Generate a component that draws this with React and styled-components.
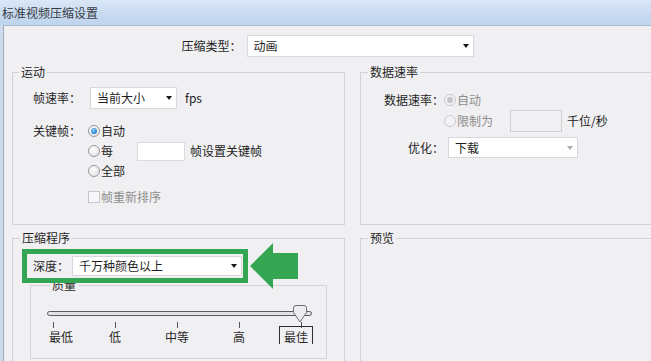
import React from "react";
import styled, { createGlobalStyle } from "styled-components";

const GlobalStyle = createGlobalStyle`
  html, body {
    margin: 0;
    padding: 0;
    overflow: hidden;
    background: #f0eff2;
  }
  body {
    font-family: "Noto Sans CJK SC", "Noto Sans", sans-serif;
    font-size: 12px;
    color: #1f1f1f;
  }
`;

const Window = styled.div`
  width: 651px;
  height: 361px;
  overflow: hidden;
  display: flex;
  flex-direction: column;
  background: #cddbec;
`;

const TitleBar = styled.div`
  height: 25px;
  flex: none;
  display: flex;
  align-items: center;
  padding-left: 2px;
  background: linear-gradient(180deg, #dae7f6 0%, #c8dbf1 55%, #bfd4ee 100%);
  color: #383c42;
  line-height: 14px;
`;

const Body = styled.div`
  flex: 1;
  margin-left: 3px;
  border-top: 1px solid #aab8ca;
  border-left: 1px solid #9dabbd;
  background: #f0eff2;
  display: flex;
  flex-direction: column;
`;

const TypeRow = styled.div`
  display: flex;
  justify-content: center;
  align-items: center;
  gap: 5px;
  margin-top: 9px;
  line-height: 22px;
`;

const Panels = styled.div`
  display: grid;
  grid-template-columns: 333px 330px;
  grid-template-rows: 160px 140px;
  column-gap: 15px;
  row-gap: 6px;
  margin: 8px 0 0 8px;
`;

const Group = styled.fieldset`
  margin: 0;
  padding: 0;
  min-width: 0;
  border: 1px solid #d3d3d7;
`;

const Legend = styled.legend`
  margin-left: ${(p) => p.$indent ?? 6}px;
  padding: 0 2px;
  line-height: 14px;
  font-size: 12px;
`;

const FormGrid = styled.div`
  display: grid;
  grid-template-columns: ${(p) => p.$labelWidth}px 1fr;
  column-gap: ${(p) => p.$gap ?? 0}px;
  padding-top: ${(p) => p.$top}px;
  align-items: center;
`;

const FieldLabel = styled.div`
  text-align: right;
  line-height: ${(p) => p.$lh ?? 20}px;
  align-self: ${(p) => (p.$top ? "start" : "center")};
  margin-top: ${(p) => p.$mt ?? 0}px;
  color: ${(p) => (p.$disabled ? "#8d8d8d" : "inherit")};
`;

const Controls = styled.div`
  display: flex;
  flex-direction: ${(p) => (p.$column ? "column" : "row")};
  align-items: ${(p) => (p.$column ? "stretch" : "center")};
  margin-top: ${(p) => p.$mt ?? 0}px;
  min-height: 20px;
`;

const SelectBox = styled.div`
  box-sizing: border-box;
  display: flex;
  align-items: center;
  justify-content: space-between;
  width: ${(p) => p.$w}px;
  height: ${(p) => p.$h ?? 22}px;
  margin-left: ${(p) => p.$ml ?? 0}px;
  padding: 0 4px 0 6px;
  background: #fff;
  border: 1px solid #d8d8dc;
  line-height: 14px;
  white-space: nowrap;
`;

const Caret = styled.span`
  width: 0;
  height: 0;
  border-left: 3.5px solid transparent;
  border-right: 3.5px solid transparent;
  border-top: 4px solid ${(p) => (p.$muted ? "#a9a9ad" : "#1a1a1a")};
`;

const Unit = styled.span`
  margin-left: ${(p) => p.$ml ?? 5}px;
  line-height: 20px;
  color: ${(p) => (p.$disabled ? "#8d8d8d" : "#222")};
`;

const Option = styled.label`
  display: flex;
  align-items: center;
  height: 20px;
  width: ${(p) => (p.$w ? `${p.$w}px` : "auto")};
  flex: none;
  color: ${(p) => (p.$disabled ? "#8d8d8d" : "inherit")};
  line-height: 14px;
`;

const RadioDot = styled.span`
  box-sizing: border-box;
  width: 12px;
  height: 12px;
  margin-right: 1px;
  border-radius: 50%;
  border: 1px solid ${(p) => (p.$disabled ? "#cacace" : "#9a9a9e")};
  background: ${(p) =>
    p.$disabled
      ? "#f3f3f5"
      : "radial-gradient(circle at 40% 35%, #ffffff 0%, #e4e4e8 80%)"};
  display: flex;
  align-items: center;
  justify-content: center;
  &::after {
    content: "";
    display: ${(p) => (p.$checked ? "block" : "none")};
    width: 6px;
    height: 6px;
    border-radius: 50%;
    background: ${(p) =>
      p.$disabled
        ? "#c4c4c8"
        : "radial-gradient(circle at 40% 35%, #8fd0ff 0%, #2277c9 75%)"};
  }
`;

const CheckBox = styled.span`
  box-sizing: border-box;
  width: 12px;
  height: 12px;
  margin-right: 1px;
  border: 1px solid #c6c6ca;
  background: #f6f6f8;
`;

const TextBox = styled.span`
  box-sizing: border-box;
  width: ${(p) => p.$w}px;
  height: ${(p) => p.$h}px;
  flex: none;
  background: ${(p) => (p.$disabled ? "#f1f1f3" : "#fff")};
  border: 1px solid ${(p) => (p.$disabled ? "#cfcfd3" : "#dcdce0")};
`;

const DepthRow = styled.div`
  position: relative;
  display: flex;
  align-items: center;
  width: 216px;
  height: 20px;
  margin: 11px 0 2px 14px;
  padding-left: 6px;
  box-sizing: border-box;
  line-height: 14px;
  z-index: 1;
  &::after {
    content: "";
    position: absolute;
    top: -7px;
    bottom: -7px;
    left: -5px;
    right: -5px;
    border: 5px solid #34a553;
    pointer-events: none;
  }
`;

const Pointer = styled.svg`
  position: absolute;
  left: 223px;
  top: -13px;
`;

const QualityGroup = styled(Group)`
  margin: 0 17px;
  padding: 19px 14px 14px 16px;
`;

const Track = styled.div`
  position: relative;
  height: 5px;
  box-sizing: border-box;
  border: 1px solid #5b5b5f;
  border-radius: 3px;
  background: #e3e3e6;
`;

const Thumb = styled.svg`
  position: absolute;
  right: 3px;
  top: -7px;
`;

const Scale = styled.div`
  display: grid;
  grid-template-columns: repeat(5, 62px);
  margin: 6px 0 0 -25px;
`;

const Stop = styled.div`
  display: flex;
  flex-direction: column;
  align-items: center;
`;

const Tick = styled.span`
  width: 1px;
  height: 6px;
  background: #55555a;
`;

const StopLabel = styled.span`
  line-height: 14px;
  transform: translateX(${(p) => p.$shift ?? 0}px);
  padding: ${(p) => (p.$focus ? "3px 4px 0" : "0")};
  margin-top: ${(p) => (p.$focus ? -2 : 2)}px;
  border: ${(p) => (p.$focus ? "1px solid #2d2d30" : "none")};
  border-bottom: none;
  color: #2a2a2a;
`;

const stops = [
  { label: "最低", shift: 8 },
  { label: "低" },
  { label: "中等" },
  { label: "高" },
  { label: "最佳", shift: -5, focus: true },
];

function Radio({ checked, disabled, width, children }) {
  return (
    <Option $w={width} $disabled={disabled}>
      <RadioDot $checked={checked} $disabled={disabled} />
      {children}
    </Option>
  );
}

function Select({ value, width, height, ml, muted }) {
  return (
    <SelectBox $w={width} $h={height} $ml={ml}>
      <span>{value}</span>
      <Caret $muted={muted} />
    </SelectBox>
  );
}

export default function App() {
  return (
    <>
      <GlobalStyle />
      <Window>
        <TitleBar>标准视频压缩设置</TitleBar>
        <Body>
          <TypeRow>
            <span>压缩类型：</span>
            <Select value="动画" width={227} />
          </TypeRow>

          <Panels>
            <Group>
              <Legend>运动</Legend>
              <FormGrid $labelWidth={68} $gap={7} $top={8}>
                <FieldLabel $lh={22}>帧速率：</FieldLabel>
                <Controls>
                  <Select value="当前大小" width={87} ml={2} />
                  <Unit $ml={8}>fps</Unit>
                </Controls>

                <FieldLabel $top $mt={12}>关键帧：</FieldLabel>
                <Controls $column $mt={12}>
                  <Radio checked>自动</Radio>
                  <Controls>
                    <Radio width={49}>每</Radio>
                    <TextBox $w={48} $h={19} />
                    <Unit>帧设置关键帧</Unit>
                  </Controls>
                  <Radio>全部</Radio>
                </Controls>

                <span />
                <Controls $mt={6}>
                  <Option $disabled>
                    <CheckBox />
                    帧重新排序
                  </Option>
                </Controls>
              </FormGrid>
            </Group>

            <Group>
              <Legend $indent={7}>数据速率</Legend>
              <FormGrid $labelWidth={83} $top={11}>
                <FieldLabel $top>数据速率：</FieldLabel>
                <Controls $column>
                  <Radio checked disabled>自动</Radio>
                  <Controls>
                    <Radio disabled width={66}>限制为</Radio>
                    <TextBox $w={52} $h={22} $disabled />
                    <Unit $ml={5}>千位/秒</Unit>
                  </Controls>
                </Controls>

                <FieldLabel $mt={5}>优化：</FieldLabel>
                <Controls $mt={5}>
                  <Select value="下载" width={130} height={21} ml={4} muted />
                </Controls>
              </FormGrid>
            </Group>

            <Group>
              <Legend $indent={7}>压缩程序</Legend>
              <DepthRow>
                <span>深度：</span>
                <Select value="千万种颜色以上" width={170} height={20} ml={3} />
                <Pointer width="48" height="46" viewBox="0 0 48 46">
                  <path d="M0 23 L23 0 L23 10 L48 10 L48 36 L23 36 L23 46 Z" fill="#34a553" />
                </Pointer>
              </DepthRow>
              <QualityGroup>
                <Legend $indent={3}>质量</Legend>
                <Track>
                  <Thumb width="16" height="18" viewBox="0 0 16 18">
                    <path
                      d="M1.5 7.5 V3 Q1.5 0.5 4 0.5 H12 Q14.5 0.5 14.5 3 V7.5 L8 17 Z"
                      fill="#ececef"
                      stroke="#6f6f74"
                      strokeWidth="1"
                    />
                  </Thumb>
                </Track>
                <Scale>
                  {stops.map((s) => (
                    <Stop key={s.label}>
                      <Tick />
                      <StopLabel $shift={s.shift} $focus={s.focus}>
                        {s.label}
                      </StopLabel>
                    </Stop>
                  ))}
                </Scale>
              </QualityGroup>
            </Group>

            <Group>
              <Legend $indent={7}>预览</Legend>
            </Group>
          </Panels>
        </Body>
      </Window>
    </>
  );
}
